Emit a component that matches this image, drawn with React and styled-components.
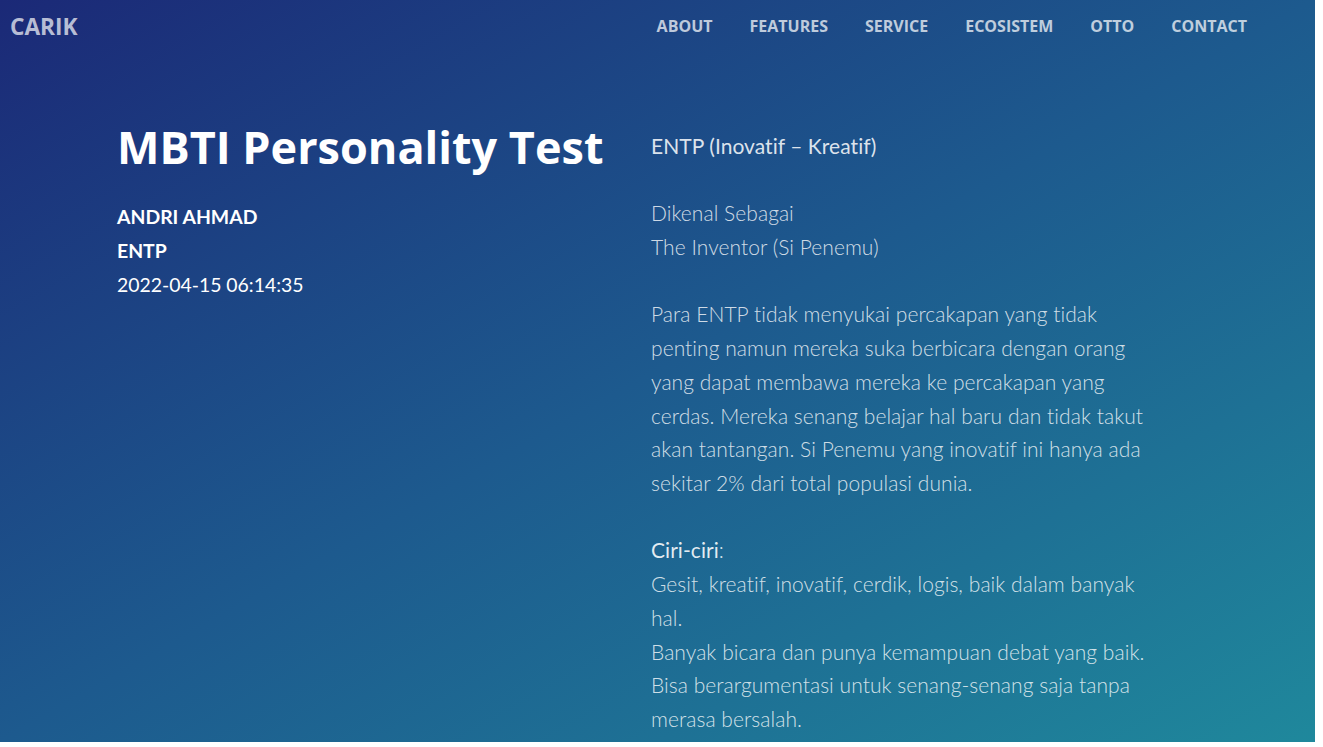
import React from "react";
import styled, { createGlobalStyle } from "styled-components";

const Global = createGlobalStyle`
  html, body { margin: 0; padding: 0; background: #fff; }
  body { font-family: "Lato", "Liberation Sans", sans-serif; }
`;

const Page = styled.div`
  width: 1315px;
  height: 742px;
  overflow: hidden;
  background: linear-gradient(to bottom right, #1b2977 0%, #1d5a8e 50%, #1f889c 100%);
  color: #fff;
`;

const NavBar = styled.header`
  display: flex;
  align-items: center;
  justify-content: space-between;
  height: 52px;
  padding: 0 68px 0 10px;
`;

const Brand = styled.a`
  font-family: "Open Sans", sans-serif;
  font-weight: 700;
  font-size: 22.7px;
  color: rgba(255, 255, 255, 0.7);
  text-decoration: none;
`;

const Menu = styled.nav`
  display: flex;
  gap: 37px;
`;

const MenuLink = styled.a`
  font-family: "Open Sans", sans-serif;
  font-weight: 700;
  font-size: 16px;
  color: rgba(255, 255, 255, 0.72);
  text-decoration: none;
  text-transform: uppercase;
`;

const Main = styled.main`
  display: grid;
  grid-template-columns: 534px 560px;
  padding: 63px 0 0 117px;
`;

const Title = styled.h1`
  margin: 0;
  font-family: "Open Sans", sans-serif;
  font-weight: 700;
  font-size: 45px;
  line-height: 64px;
  color: #fff;
`;

const MetaBlock = styled.div`
  margin-top: 21px;
`;

const MetaLine = styled.div`
  font-size: 19.4px;
  line-height: 34px;
  font-weight: ${(p) => (p.$bold ? 700 : 400)};
`;

const Info = styled.div`
  padding-top: 14px;
  font-size: 21px;
  letter-spacing: 0.05px;
  line-height: 33.7px;
  font-weight: 300;
  color: rgba(255, 255, 255, 0.8);
`;

const Lead = styled.p`
  margin: 0 0 33.7px;
  font-weight: 400;
  color: rgba(255, 255, 255, 0.86);
`;

const Para = styled.p`
  margin: 0 0 33.7px;
`;

const Strong = styled.span`
  font-weight: 400;
  color: rgba(255, 255, 255, 0.88);
`;

export default function App() {
  const nav = ["About", "Features", "Service", "Ecosistem", "Otto", "Contact"];
  return (
    <>
      <Global />
      <Page>
        <NavBar>
          <Brand href="#">CARIK</Brand>
          <Menu>
            {nav.map((n) => (
              <MenuLink key={n} href="#">{n}</MenuLink>
            ))}
          </Menu>
        </NavBar>
        <Main>
          <div>
            <Title>MBTI Personality Test</Title>
            <MetaBlock>
              <MetaLine $bold>ANDRI AHMAD</MetaLine>
              <MetaLine $bold>ENTP</MetaLine>
              <MetaLine>2022-04-15 06:14:35</MetaLine>
            </MetaBlock>
          </div>
          <Info>
            <Lead>ENTP (Inovatif – Kreatif)</Lead>
            <Para>
              Dikenal Sebagai<br />
              The Inventor (Si Penemu)
            </Para>
            <Para>
              Para ENTP tidak menyukai percakapan yang tidak<br />
              penting namun mereka suka berbicara dengan orang<br />
              yang dapat membawa mereka ke percakapan yang<br />
              cerdas. Mereka senang belajar hal baru dan tidak takut<br />
              akan tantangan. Si Penemu yang inovatif ini hanya ada<br />
              sekitar 2% dari total populasi dunia.
            </Para>
            <Para>
              <Strong>Ciri-ciri</Strong>:<br />
              Gesit, kreatif, inovatif, cerdik, logis, baik dalam banyak<br />
              hal.<br />
              Banyak bicara dan punya kemampuan debat yang baik.<br />
              Bisa berargumentasi untuk senang-senang saja tanpa<br />
              merasa bersalah.
            </Para>
          </Info>
        </Main>
      </Page>
    </>
  );
}
